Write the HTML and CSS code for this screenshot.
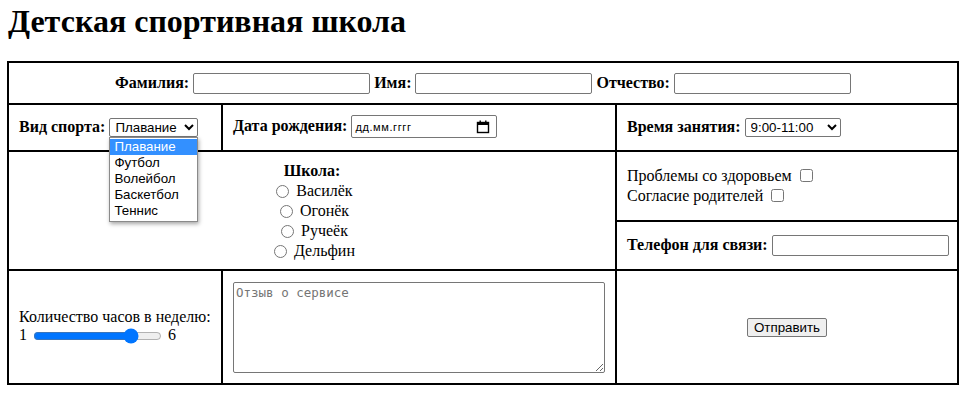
FILE: index.html
```html
<!DOCTYPE html>
<html lang="ru">
<head>
<meta charset="utf-8">
<title>Детская спортивная школа</title>
<link rel="stylesheet" href="styles.css">
</head>
<body>
<h1 class="title">Детская спортивная школа</h1>
<form class="form">
<table class="grid">
  <colgroup>
    <col class="c1"><col class="c2"><col class="c3">
  </colgroup>
  <tr class="r1">
    <td colspan="3" class="center">
      <b>Фамилия:</b> <input type="text" class="field">
      <b>Имя:</b> <input type="text" class="field">
      <b>Отчество:</b> <input type="text" class="field">
    </td>
  </tr>
  <tr class="r2">
    <td>
      <b>Вид спорта:</b>
      <span class="select-wrap">
        <select class="sel sport"><option>Плавание</option><option>Футбол</option><option>Волейбол</option><option>Баскетбол</option><option>Теннис</option></select>
        <ul class="dropdown">
          <li class="active">Плавание</li>
          <li>Футбол</li>
          <li>Волейбол</li>
          <li>Баскетбол</li>
          <li>Теннис</li>
        </ul>
      </span>
    </td>
    <td>
      <b>Дата рождения:</b>
      <span class="date-field"><span class="date-text">дд.мм.гггг</span>
        <svg class="cal" width="14" height="14" viewBox="0 0 14 14"><rect x="1.5" y="2.5" width="11" height="10" fill="none" stroke="#000" stroke-width="1.4"/><rect x="1" y="2" width="12" height="3" fill="#000"/><rect x="3.5" y="0.5" width="1.4" height="2.5" fill="#000"/><rect x="9.1" y="0.5" width="1.4" height="2.5" fill="#000"/></svg>
      </span>
    </td>
    <td>
      <b>Время занятия:</b>
      <select class="sel time"><option>9:00-11:00</option><option>11:00-13:00</option><option>15:00-17:00</option></select>
    </td>
  </tr>
  <tr class="r3">
    <td colspan="2" rowspan="2" class="center school">
      <b>Школа:</b><br>
      <label><input type="radio" name="s"> Василёк</label><br>
      <label><input type="radio" name="s"> Огонёк</label><br>
      <label><input type="radio" name="s"> Ручеёк</label><br>
      <label><input type="radio" name="s"> Дельфин</label>
    </td>
    <td class="checks">
      <label>Проблемы со здоровьем <input type="checkbox"></label><br>
      <label>Согласие родителей <input type="checkbox"></label>
    </td>
  </tr>
  <tr class="r4">
    <td>
      <b>Телефон для связи:</b> <input type="text" class="field">
    </td>
  </tr>
  <tr class="r5">
    <td>
      Количество часов в неделю:<br>
      <span class="range-row">1 <input type="range" min="1" max="6" value="5" class="range"> 6</span>
    </td>
    <td>
      <textarea class="review" placeholder="Отзыв о сервисе"></textarea>
    </td>
    <td class="center">
      <button type="button" class="send">Отправить</button>
    </td>
  </tr>
</table>
</form>
</body>
</html>
```
FILE: styles.css
```css
body {
  margin: 0 8px 8px 7px;
  font-family: "Liberation Serif", "Times New Roman", serif;
  font-size: 16px;
  color: #000;
  background: #fff;
}
.title {
  font-size: 32px;
  font-weight: bold;
  margin: 3px 0 21px 1px;
}
.form { margin: 0; }
.grid {
  border-collapse: collapse;
  border: 2px solid #000;
  width: 950px;
  table-layout: fixed;
}
.c1 { width: 214px; }
.c2 { width: 394px; }
.c3 { width: 342px; }
.grid td {
  border: 2px solid #000;
  padding: 0 10px;
  vertical-align: middle;
  white-space: nowrap;
}
.r1 { height: 42px; }
.r2 { height: 47px; }
.r3 { height: 70px; }
.r4 { height: 49px; }
.r5 { height: 114px; }
.center { text-align: center; }
.field {
  width: 177px;
  height: 21px;
  box-sizing: border-box;
  border: 1px solid #767676;
  border-radius: 2px;
  padding: 1px 2px;
  font-family: "Liberation Sans", Arial, sans-serif;
  font-size: 13.33px;
  vertical-align: baseline;
}
.sel {
  font-family: "Liberation Sans", Arial, sans-serif;
  font-size: 13.33px;
  height: 19px;
  border: 1px solid #767676;
  border-radius: 2px;
  padding: 0 0 0 1px;
  background: #fff;
  color: #000;
}
.sport { width: 89px; }
.time { width: 96px; }
.select-wrap {
  position: relative;
  display: inline-block;
}
.dropdown {
  position: absolute;
  left: 0;
  top: 19px;
  width: 89px;
  box-sizing: border-box;
  margin: 0;
  padding: 1px 0 2px;
  list-style: none;
  background: #fff;
  border: 1px solid #8a8a8a;
  box-shadow: 1px 2px 4px rgba(0,0,0,0.35);
  font-family: "Liberation Sans", Arial, sans-serif;
  font-size: 13.33px;
  line-height: 16px;
  text-align: left;
  z-index: 5;
}
.dropdown li {
  padding: 0 4px;
  height: 16px;
  white-space: nowrap;
}
.dropdown .active {
  background: #3390ff;
  color: #fff;
}
.date-field {
  display: inline-flex;
  align-items: center;
  justify-content: space-between;
  width: 146px;
  height: 23px;
  box-sizing: border-box;
  border: 1px solid #767676;
  border-radius: 2px;
  padding: 0 6px 0 3px;
  vertical-align: middle;
  position: relative;
  top: -1px;
  background: #fff;
}
.date-text {
  font-family: "Liberation Sans", Arial, sans-serif;
  font-size: 11px;
  letter-spacing: 0.6px;
  color: #000;
}
.cal { display: block; }
.grid .school { padding: 0 10px; line-height: 20px; }
.school input { margin: 0 3px 0 5px; vertical-align: -2px; }
.checks { line-height: 20px; }
.checks input { margin: 0 3px 0 4px; vertical-align: -1px; }
.review {
  display: block;
  width: 372px;
  height: 91px;
  box-sizing: border-box;
  border: 1px solid #767676;
  border-radius: 2px;
  padding: 2px;
  font-family: "DejaVu Sans Mono", monospace;
  font-size: 12.5px;
  resize: both;
}
.review::placeholder { color: #757575; }
.range-row { white-space: nowrap; }
.range {
  width: 129px;
  margin: 2px 2px;
  vertical-align: middle;
  accent-color: #0075ff;
}
.send {
  font-family: "Liberation Sans", Arial, sans-serif;
  font-size: 13.33px;
  padding: 1px 6px;
  border: 1px solid #767676;
  border-radius: 2px;
  background: #efefef;
  color: #000;
}
```
